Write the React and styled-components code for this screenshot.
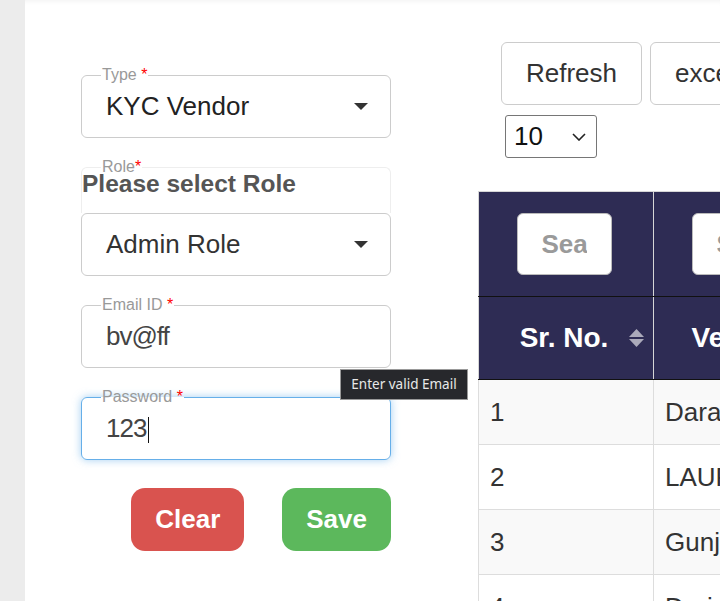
import styled, { createGlobalStyle } from 'styled-components';

const GlobalStyle = createGlobalStyle`
  html, body {
    margin: 0;
    padding: 0;
  }
  body {
    background: #ececec;
    font-family: "Liberation Sans", Arial, sans-serif;
    overflow: hidden;
  }
  * {
    box-sizing: border-box;
  }
`;

const Page = styled.div`
    display: flex;
    height: 601px;
    overflow: hidden;
`;

const Gutter = styled.div`
    width: 25px;
    flex-shrink: 0;
    background: #ececec;
`;

const Main = styled.main`
    flex: 1;
    min-width: 0;
    display: flex;
    align-items: flex-start;
    padding: 42px 0 0 56px;
    background: #fff;
    overflow: hidden;
    box-shadow: inset 0 6px 6px -6px rgba(0, 0, 0, 0.08);
`;

const FormColumn = styled.div`
    width: 310px;
    flex-shrink: 0;
    display: flex;
    flex-direction: column;
    gap: 21px;
    padding-top: 25px;
`;

const Field = styled.fieldset`
    position: relative;
    margin: 0;
    min-width: 0;
    padding: 0 22px 7px 19px;
    border: 1px solid ${({ $focused }) => ($focused ? '#66afe9' : '#ccc')};
    border-radius: 6px;
    box-shadow: ${({ $focused }) => ($focused ? '0 0 8px rgba(102, 175, 233, 0.6)' : 'none')};
`;

const Legend = styled.legend`
    padding: 0 1px;
    margin-left: ${({ $offset }) => $offset || 0}px;
    font-size: 16px;
    line-height: 16px;
    color: #999;
`;

const Req = styled.span`
    color: #f00;
`;

const ValueRow = styled.div`
    height: 47px;
    display: flex;
    align-items: center;
    justify-content: space-between;
    padding-left: 5px;
    font-size: 26px;
    color: ${({ $muted }) => ($muted ? '#444' : '#222')};
    letter-spacing: ${({ $muted }) => ($muted ? '-1px' : 'normal')};
`;

const Caret = styled.span`
    width: 0;
    height: 0;
    border-left: 7.5px solid transparent;
    border-right: 7.5px solid transparent;
    border-top: 7px solid #333;
`;

const TextCaret = styled.span`
    display: inline-block;
    width: 1px;
    height: 26px;
    margin-left: 2px;
    background: #111;
    vertical-align: middle;
`;

const RoleGroup = styled.div`
    display: flex;
    flex-direction: column;
`;

const RoleFrame = styled.fieldset`
    margin: 0;
    min-width: 0;
    padding: 0 0 15px 0;
    border: 1px solid #eee;
    border-bottom: none;
    border-radius: 6px 6px 0 0;
`;

const RolePrompt = styled.div`
    margin-top: -5px;
    font-size: 24.5px;
    line-height: 28px;
    font-weight: bold;
    color: #555;
`;

const SelectBox = styled.div`
    height: 63px;
    display: flex;
    align-items: center;
    justify-content: space-between;
    padding: 0 22px 0 24px;
    border: 1px solid #ccc;
    border-radius: 6px;
    font-size: 26px;
    color: #333;
`;

const Tooltip = styled.div`
    position: absolute;
    left: 258px;
    top: 56px;
    width: 128px;
    height: 31px;
    border: 1px solid #999;
    background: #27282c;
    color: #e8e8e8;
    font-family: "Noto Sans", "Open Sans", sans-serif;
    font-size: 13.5px;
    line-height: 29px;
    text-align: center;
    z-index: 2;
`;

const ButtonRow = styled.div`
    display: flex;
    justify-content: flex-end;
    gap: 38px;
    margin-top: 7px;
`;

const ActionButton = styled.button`
    height: 63px;
    padding: 0 24px;
    border: none;
    border-radius: 14px;
    font-family: inherit;
    font-size: 26px;
    font-weight: bold;
    color: #fff;
    background: ${({ $variant }) => ($variant === 'danger' ? '#d9534f' : '#5cb85c')};
    cursor: pointer;
`;

const ListColumn = styled.div`
    margin-left: 87px;
    display: flex;
    flex-direction: column;
    align-items: flex-start;
    flex-shrink: 0;
    & > * {
        flex-shrink: 0;
    }
`;

const Toolbar = styled.div`
    display: flex;
    gap: 8px;
    padding-left: 23px;
`;

const ToolButton = styled.button`
    height: 63px;
    flex-shrink: 0;
    padding: 0 24px;
    border: 1px solid #ccc;
    border-radius: 6px;
    background: #fff;
    font-family: inherit;
    font-size: 26px;
    color: #333;
`;

const PageSize = styled.div`
    width: 92px;
    height: 43px;
    margin: 10px 0 0 27px;
    display: flex;
    align-items: center;
    justify-content: space-between;
    padding: 0 10px 0 8px;
    border: 1px solid #767676;
    border-radius: 3px;
    font-size: 26px;
    color: #111;
`;

const Table = styled.table`
    margin-top: 33px;
    border-collapse: collapse;
    table-layout: fixed;
    width: 700px;
    border-left: 1px solid #ccc;
`;

const HeadCell = styled.th`
    position: relative;
    background: #2e2c54;
    border: 1px solid #d6d6d6;
    border-bottom: 1px solid #111;
    padding: 0 4px 0 0;
    color: #fff;
    font-size: 28px;
    font-weight: bold;
    text-align: center;
    white-space: nowrap;
    overflow: hidden;
`;

const SearchInput = styled.input`
    width: 95px;
    height: 62px;
    padding: 0 24px;
    border: 1px solid #bbb;
    border-radius: 6px;
    background: #fff;
    font-family: inherit;
    font-size: 26px;
    font-weight: bold;
    outline: none;
    &::placeholder {
        color: #9a9a9a;
    }
`;

const SortIcon = styled.svg`
    position: absolute;
    right: 9px;
    top: 50%;
    transform: translateY(-50%);
`;

const BodyRow = styled.tr`
    height: 65px;
    background: ${({ $odd }) => ($odd ? '#f9f9f9' : '#fff')};
`;

const Cell = styled.td`
    border: 1px solid #ddd;
    padding: 0 11px;
    font-size: 26px;
    color: #333;
    white-space: nowrap;
    overflow: hidden;
`;

const rows = [
    { id: 1, name: 'Darade Enterprises', email: 'darade@mail.com' },
    { id: 2, name: 'LAURUS Infotech', email: 'laurus@mail.com' },
    { id: 3, name: 'Gunjan Services', email: 'gunjan@mail.com' },
    { id: 4, name: 'Dariya Traders', email: 'dariya@mail.com' },
];

const columns = ['Sr. No.', 'Vendor', 'Email', 'Action'];

const App = () => {
    return (
        <>
            <GlobalStyle />
            <Page>
                <Gutter />
                <Main>
                    <FormColumn>
                        <Field>
                            <Legend>
                                Type <Req>*</Req>
                            </Legend>
                            <ValueRow>
                                KYC Vendor
                                <Caret />
                            </ValueRow>
                        </Field>

                        <RoleGroup>
                            <RoleFrame>
                                <Legend $offset={19}>
                                    Role<Req>*</Req>
                                </Legend>
                                <RolePrompt>Please select Role</RolePrompt>
                            </RoleFrame>
                            <SelectBox>
                                Admin Role
                                <Caret />
                            </SelectBox>
                        </RoleGroup>

                        <Field>
                            <Legend>
                                Email ID <Req>*</Req>
                            </Legend>
                            <ValueRow $muted>bv@ff</ValueRow>
                            <Tooltip>Enter valid Email</Tooltip>
                        </Field>

                        <Field $focused>
                            <Legend>
                                Password <Req>*</Req>
                            </Legend>
                            <ValueRow $muted>
                                <span>
                                    123
                                    <TextCaret />
                                </span>
                            </ValueRow>
                        </Field>

                        <ButtonRow>
                            <ActionButton $variant="danger">Clear</ActionButton>
                            <ActionButton $variant="success">Save</ActionButton>
                        </ButtonRow>
                    </FormColumn>

                    <ListColumn>
                        <Toolbar>
                            <ToolButton>Refresh</ToolButton>
                            <ToolButton>excel</ToolButton>
                        </Toolbar>
                        <PageSize>
                            10
                            <svg width="14" height="8" viewBox="0 0 14 8">
                                <polyline points="1,1 7,7 13,1" fill="none" stroke="#222" strokeWidth="1.6" />
                            </svg>
                        </PageSize>

                        <Table>
                            <colgroup>
                                <col style={{ width: 175 }} />
                                <col style={{ width: 175 }} />
                                <col style={{ width: 175 }} />
                                <col style={{ width: 175 }} />
                            </colgroup>
                            <thead>
                                <tr style={{ height: 105 }}>
                                    {columns.map((c) => (
                                        <HeadCell key={c}>
                                            <SearchInput placeholder="Search" />
                                        </HeadCell>
                                    ))}
                                </tr>
                                <tr style={{ height: 83 }}>
                                    {columns.map((c) => (
                                        <HeadCell key={c}>
                                            {c}
                                            <SortIcon width="15" height="18" viewBox="0 0 15 18">
                                                <polygon points="7.5,0 15,8 0,8" fill="rgba(255,255,255,0.6)" />
                                                <polygon points="0,10 15,10 7.5,18" fill="rgba(255,255,255,0.6)" />
                                            </SortIcon>
                                        </HeadCell>
                                    ))}
                                </tr>
                            </thead>
                            <tbody>
                                {rows.map((r, i) => (
                                    <BodyRow key={r.id} $odd={i % 2 === 0}>
                                        <Cell>{r.id}</Cell>
                                        <Cell>{r.name}</Cell>
                                        <Cell>{r.email}</Cell>
                                        <Cell>Edit</Cell>
                                    </BodyRow>
                                ))}
                            </tbody>
                        </Table>
                    </ListColumn>
                </Main>
            </Page>
        </>
    );
};

export default App;
